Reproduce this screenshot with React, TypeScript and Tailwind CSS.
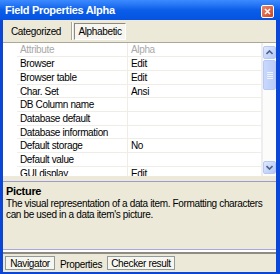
import React from "react";

const FONT = { fontFamily: '"Liberation Sans", Arial, sans-serif' };

type Row = { name: string; value: string; h: number };

const ROWS: Row[] = [
  { name: "Browser", value: "Edit", h: 14 },
  { name: "Browser table", value: "Edit", h: 14 },
  { name: "Char. Set", value: "Ansi", h: 13 },
  { name: "DB Column name", value: "", h: 14 },
  { name: "Database default", value: "", h: 14 },
  { name: "Database information", value: "", h: 13 },
  { name: "Default storage", value: "No", h: 14 },
  { name: "Default value", value: "", h: 14 },
  { name: "GUI display", value: "Edit", h: 14 },
];

function ScrollArrow({ down }: { down?: boolean }) {
  return (
    <div className="h-[13px] w-[13px] rounded-[2px] border border-[#b7c8f5] bg-gradient-to-br from-[#dfe8fe] to-[#b3c7f6] flex items-center justify-center">
      <svg width="7" height="5" viewBox="0 0 7 5">
        <path
          d={down ? "M0.5 1 L3.5 4 L6.5 1" : "M0.5 4 L3.5 1 L6.5 4"}
          fill="none"
          stroke="#4d6185"
          strokeWidth="1.6"
        />
      </svg>
    </div>
  );
}

export default function App() {
  return (
    <div className="w-[280px] h-[274px] bg-[#0a46d8] flex flex-col text-black" style={FONT}>
      {/* title bar */}
      <div className="h-[20px] shrink-0 flex items-center justify-between pl-[5px] pr-[6px] bg-gradient-to-b from-[#3d8bff] via-[#0a5ee9] to-[#0553e1]">
        <span className="text-white font-bold text-[11px] tracking-[-0.3px] leading-none">
          Field Properties Alpha
        </span>
        <div className="h-[13px] w-[13px] rounded-[2px] border border-white bg-gradient-to-br from-[#e9866a] to-[#d1421c] flex items-center justify-center mt-[3px]">
          <svg width="7" height="7" viewBox="0 0 7 7">
            <path d="M1 1 L6 6 M6 1 L1 6" stroke="#fff" strokeWidth="1.6" />
          </svg>
        </div>
      </div>

      <div className="flex-1 ml-[3px] mr-[4px] mb-[3px] bg-[#ece9d8] flex flex-col text-[10px] tracking-[-0.35px]">
        {/* toolbar */}
        <div className="h-[23px] shrink-0 flex items-center border-b border-[#aca899]">
          <span className="pl-[8px] w-[68px]">Categorized</span>
          <div className="h-[18px] w-[2px] border-l border-[#aca899] border-r border-r-white" />
          <div className="h-[17px] w-[52px] ml-[1px] flex items-center justify-center border border-t-[#8d8a7f] border-l-[#8d8a7f] border-b-white border-r-white bg-[#f6f5ef]">
            Alphabetic
          </div>
        </div>

        {/* grid */}
        <div className="h-[133px] shrink-0 bg-white flex overflow-hidden">
          <div className="w-[14px] shrink-0" />
          <div className="flex-1 flex flex-col">
            <div className="h-[14px] shrink-0 flex items-center border-b border-[#efeee6] text-[#a9a9a9]">
              <span className="w-[111px] pl-[3px] border-r border-[#efeee6] h-full flex items-center">Attribute</span>
              <span className="pl-[3px]">Alpha</span>
            </div>
            {ROWS.map((r) => (
              <div
                key={r.name}
                className="shrink-0 flex items-center border-b border-[#efeee6]"
                style={{ height: r.h }}
              >
                <span className="w-[111px] pl-[3px] border-r border-[#efeee6] h-full flex items-center">{r.name}</span>
                <span className="pl-[3px]">{r.value}</span>
              </div>
            ))}
          </div>
          <div className="w-[2px] shrink-0 bg-[#eeeeee]" />
          <div className="w-[13px] shrink-0 flex flex-col pt-[3px] pb-[2px] bg-[#fcfcfa]">
            <ScrollArrow />
            <div className="h-[30px] w-[13px] mt-[1px] rounded-[2px] border border-[#b7c8f5] bg-gradient-to-r from-[#c9d8fc] to-[#b9cbf7] flex flex-col items-center justify-center gap-[1px]">
              <div className="h-px w-[6px] bg-[#eef3fe]" />
              <div className="h-px w-[6px] bg-[#eef3fe]" />
              <div className="h-px w-[6px] bg-[#eef3fe]" />
              <div className="h-px w-[6px] bg-[#eef3fe]" />
            </div>
            <div className="flex-1" />
            <ScrollArrow down />
          </div>
        </div>

        {/* description */}
        <div className="h-[5px] shrink-0" />
        <div className="h-[68px] shrink-0 border-t border-[#9d9bcc] pl-[3px] pt-[3px] leading-[11px]">
          <div className="font-bold text-[11px] tracking-[-0.3px] leading-[13px]">Picture</div>
          <div>The visual representation of a data item. Formatting characters</div>
          <div>can be used in a data item's picture.</div>
        </div>
        <div className="h-px shrink-0 bg-[#a9a7df]" />
        <div className="h-[2px] shrink-0 bg-white" />
        <div className="h-[2px] shrink-0 bg-[#8e8c82]" />

        {/* bottom tabs */}
        <div className="flex-1 flex items-start pl-[2px] pt-[2px]">
          <div className="h-[14px] w-[50px] flex items-center justify-center border border-[#919b9c] border-t-[#919b9c] bg-[#f7f6ee]">
            Navigator
          </div>
          <div className="w-[52px] h-[16px] flex items-end justify-center">Properties</div>
          <div className="h-[14px] w-[68px] flex items-center justify-center border border-[#919b9c] bg-[#f7f6ee]">
            Checker result
          </div>
        </div>
      </div>
    </div>
  );
}
